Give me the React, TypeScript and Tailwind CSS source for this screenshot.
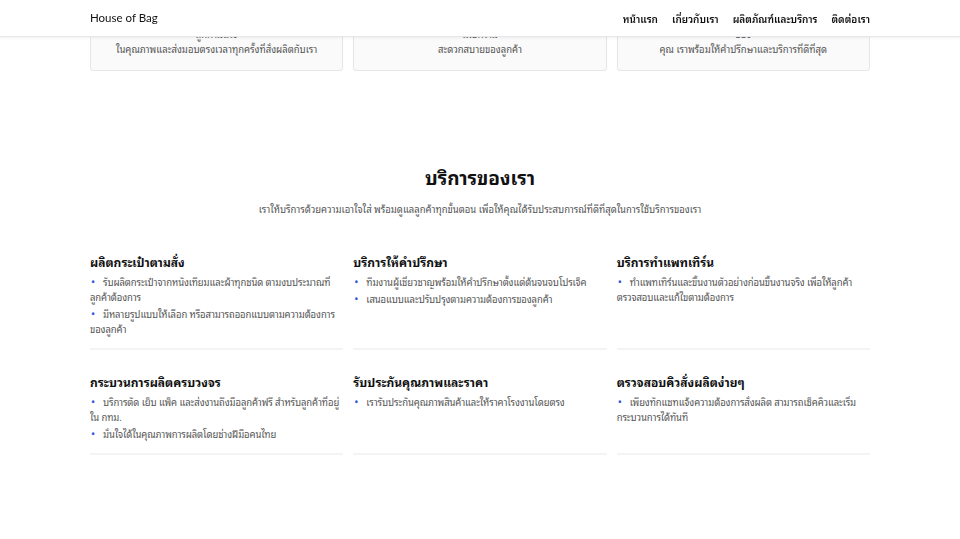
import type { ReactNode } from 'react'

const thai = "font-['Noto_Sans_Thai_Looped','Noto_Sans_Thai',sans-serif]"

const links = ['หน้าแรก', 'เกี่ยวกับเรา', 'ผลิตภัณฑ์และบริการ', 'ติดต่อเรา']

const highlights = [
  ['เราเป็นโรงงานผลิตกระเป๋าที่มีประสบการณ์ยาวนาน ทำให้ลูกค้ามั่นใจ', 'ในคุณภาพและส่งมอบตรงเวลาทุกครั้งที่สั่งผลิตกับเรา'],
  ['เราดูแลการผลิตครบวงจรตั้งแต่ออกแบบจนถึงการจัดส่ง เพื่อความ', 'สะดวกสบายของลูกค้า'],
  ['ไม่ว่าจะเป็นกระเป๋าผ้าหรือกระเป๋าหนังตามที่ลูกค้าต้องการของ', 'คุณ เราพร้อมให้คำปรึกษาและบริการที่ดีที่สุด'],
]

const services: { title: string; items: string[] }[] = [
  {
    title: 'ผลิตกระเป๋าตามสั่ง',
    items: [
      'รับผลิตกระเป๋าจากหนังเทียมและผ้าทุกชนิด ตามงบประมาณที่ลูกค้าต้องการ',
      'มีหลายรูปแบบให้เลือก หรือสามารถออกแบบตามความต้องการของลูกค้า',
    ],
  },
  {
    title: 'บริการให้คำปรึกษา',
    items: [
      'ทีมงานผู้เชี่ยวชาญพร้อมให้คำปรึกษาตั้งแต่ต้นจนจบโปรเจ็ค',
      'เสนอแบบและปรับปรุงตามความต้องการของลูกค้า',
    ],
  },
  {
    title: 'บริการทำแพทเทิร์น',
    items: ['ทำแพทเทิร์นและขึ้นงานตัวอย่างก่อนขึ้นงานจริง เพื่อให้ลูกค้าตรวจสอบและแก้ไขตามต้องการ'],
  },
  {
    title: 'กระบวนการผลิตครบวงจร',
    items: [
      'บริการตัด เย็บ แพ็ค และส่งงานถึงมือลูกค้าฟรี สำหรับลูกค้าที่อยู่ใน กทม.',
      'มั่นใจได้ในคุณภาพการผลิตโดยช่างฝีมือคนไทย',
    ],
  },
  {
    title: 'รับประกันคุณภาพและราคา',
    items: ['เรารับประกันคุณภาพสินค้าและให้ราคาโรงงานโดยตรง'],
  },
  {
    title: 'ตรวจสอบคิวสั่งผลิตง่ายๆ',
    items: ['เพียงทักแชทแจ้งความต้องการสั่งผลิต สามารถเช็คคิวและเริ่มกระบวนการได้ทันที'],
  },
]

const Navbar = () => (
  <header className="fixed inset-x-0 top-0 z-10 h-[37px] border-b border-gray-200 bg-white shadow-[0_1px_3px_rgba(0,0,0,0.06)]">
    <div className="mx-auto flex h-full w-[780px] items-center justify-between">
      <span className="font-['Lato',sans-serif] text-[11.5px] text-[#111]">House of Bag</span>
      <nav className="flex gap-[14px] text-[10px] font-semibold text-[#111]">
        {links.map((l) => (
          <a key={l} href="#">
            {l}
          </a>
        ))}
      </nav>
    </div>
  </header>
)

const Card = ({ children }: { children: ReactNode }) => (
  <div className="rounded-[3px] border border-gray-200 bg-[#fafafa] px-3 pt-4 pb-[14px] text-center text-[9.5px] leading-[15px] text-[#555] shadow-[0_1px_2px_rgba(0,0,0,0.04)]">
    {children}
  </div>
)

export default function App() {
  return (
    <div className={`min-h-screen bg-white ${thai}`}>
      <Navbar />

      {/* feature cards, scrolled mostly out of view */}
      <div className="mx-auto flex h-[71px] w-[780px] items-end overflow-hidden">
        <div className="grid w-full grid-cols-3 gap-[10px]">
          {highlights.map((lines, i) => (
            <Card key={i}>
              <p className="mb-2 text-[13px] font-semibold text-[#222]">คุณภาพที่เชื่อถือได้</p>
              {lines.map((l) => (
                <p key={l}>{l}</p>
              ))}
            </Card>
          ))}
        </div>
      </div>

      <section className="mx-auto w-[780px] pt-[92px] pb-20">
        <h2 className="text-center text-[19px] leading-[28px] font-bold text-[#111]">บริการของเรา</h2>
        <p className="mt-[10px] text-center text-[9.5px] leading-[16px] text-[#555]">
          เราให้บริการด้วยความเอาใจใส่ พร้อมดูแลลูกค้าทุกขั้นตอน เพื่อให้คุณได้รับประสบการณ์ที่ดีที่สุดในการใช้บริการของเรา
        </p>

        <div className="mt-[35px] grid grid-cols-3 gap-x-[10px] gap-y-[22px]">
          {services.map((s) => (
            <div key={s.title} className="border-b-2 border-gray-100 pb-[12px]">
              <h3 className="text-[12px] leading-[20px] font-bold text-[#111]">{s.title}</h3>
              <ul className="mt-[2px] flex flex-col gap-[2px] text-[9.5px] leading-[15px] tracking-[-0.1px] text-[#555]">
                {s.items.map((it) => (
                  <li key={it}>
                    <span className="inline-block w-[13px] pl-[1px] text-[11px] leading-none text-[#2f54d8]">•</span>
                    {it}
                  </li>
                ))}
              </ul>
            </div>
          ))}
        </div>
      </section>
    </div>
  )
}
